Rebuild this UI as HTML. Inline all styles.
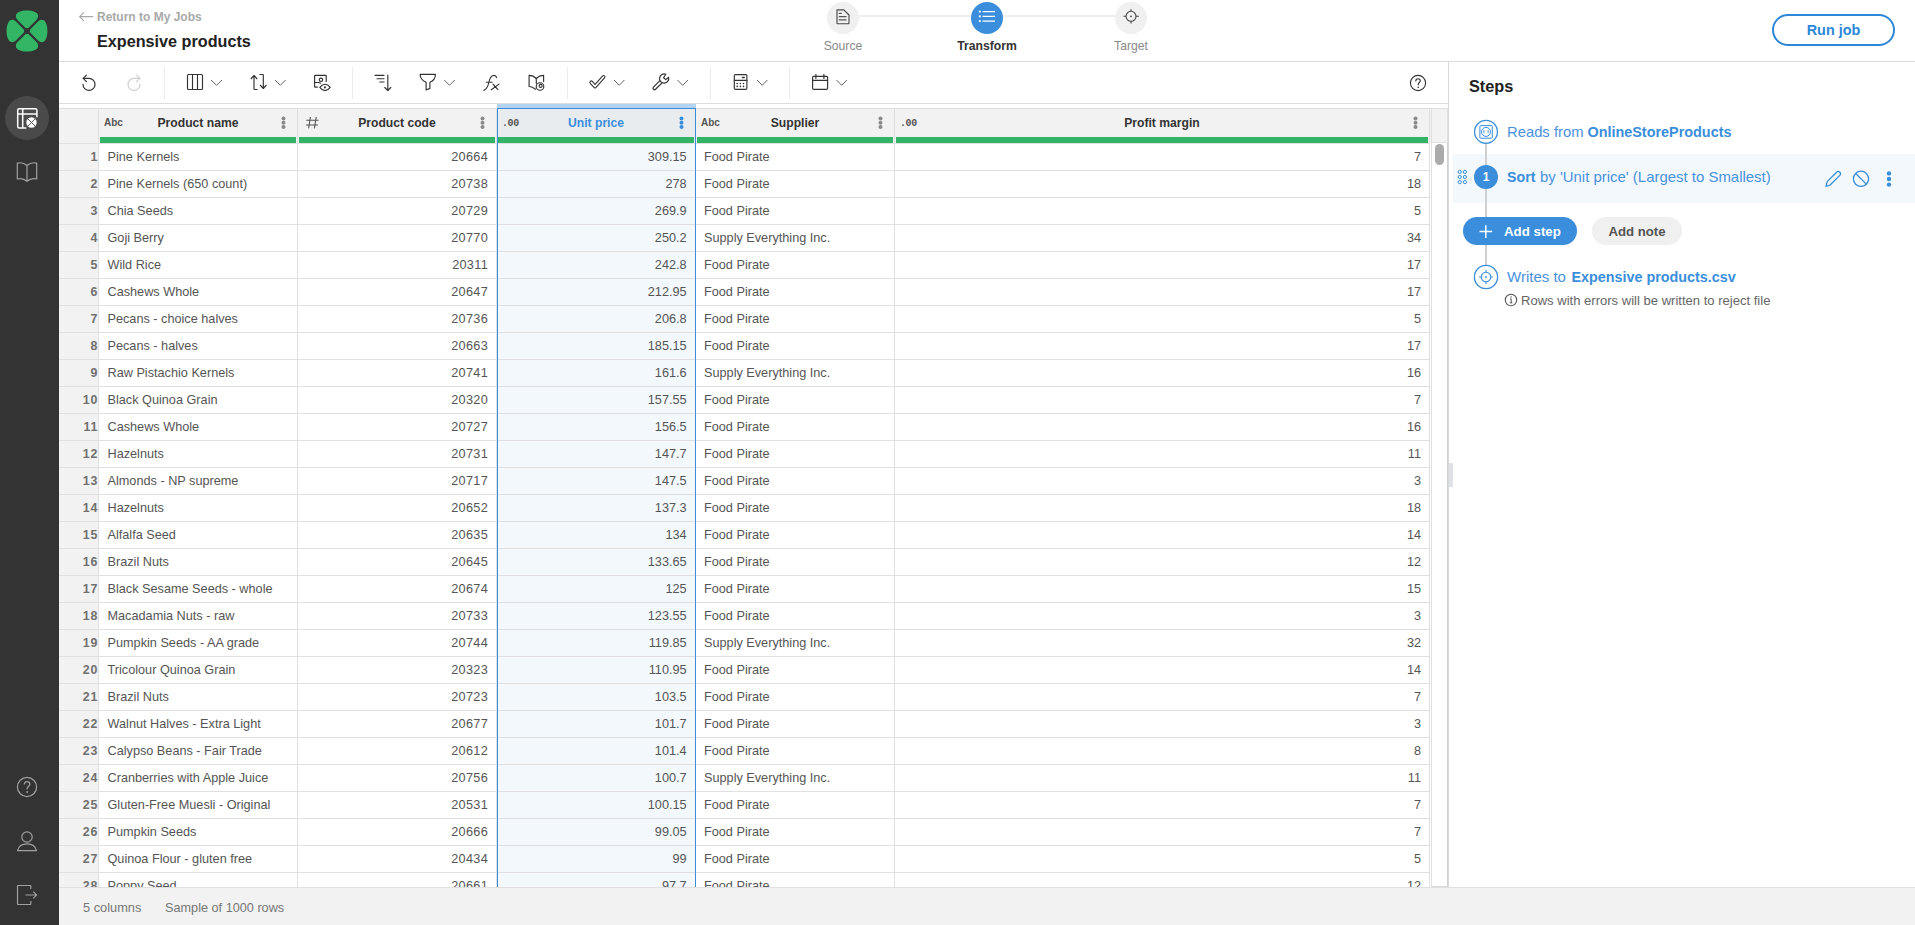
<!DOCTYPE html>
<html><head><meta charset="utf-8"><style>
*{box-sizing:border-box;margin:0;padding:0}
html,body{width:1915px;height:925px;overflow:hidden;background:#fff;font-family:"Liberation Sans",sans-serif}
.a{position:absolute}
.t{position:absolute;white-space:nowrap;line-height:1}
</style></head>
<body>
<div class="a" style="left:0;top:0;width:59px;height:925px;background:#333333"></div><div class="a" style="left:5px;top:96px;width:44px;height:44px;border-radius:50%;background:#4a4a4a"></div><div class="a" style="left:59px;top:61px;width:1856px;height:1px;background:#dcdcdc"></div><div class="t" style="left:97px;top:11px;font-size:12px;font-weight:700;color:#a9a9a9">Return to My Jobs</div><div class="t" style="left:97px;top:33px;font-size:16.2px;font-weight:700;color:#222">Expensive products</div><div class="a" style="left:859px;top:15px;width:112px;height:2px;background:#eeeeee"></div><div class="a" style="left:1003px;top:15px;width:112px;height:2px;background:#eeeeee"></div><div class="a" style="left:827px;top:2px;width:32px;height:32px;border-radius:50%;background:#f0f0f0"></div><div class="a" style="left:971px;top:2px;width:32px;height:32px;border-radius:50%;background:#3a8edb"></div><div class="a" style="left:1115px;top:2px;width:32px;height:32px;border-radius:50%;background:#f0f0f0"></div><div class="t" style="left:793px;width:100px;text-align:center;top:40px;font-size:12.2px;color:#8a8a8a">Source</div><div class="t" style="left:937px;width:100px;text-align:center;top:40px;font-size:12.2px;font-weight:700;color:#333">Transform</div><div class="t" style="left:1081px;width:100px;text-align:center;top:40px;font-size:12.2px;color:#8a8a8a">Target</div><div class="a" style="left:1772px;top:14px;width:123px;height:32px;border:2px solid #2d87d9;border-radius:16px"></div><div class="t" style="left:1772px;width:123px;text-align:center;top:23px;font-size:14.4px;font-weight:700;color:#2d87d9">Run job</div><div class="a" style="left:59px;top:103px;width:1389px;height:1px;background:#dcdcdc"></div><div class="a" style="left:164px;top:67px;width:1px;height:32px;background:#ececec"></div><div class="a" style="left:352px;top:67px;width:1px;height:32px;background:#ececec"></div><div class="a" style="left:567px;top:67px;width:1px;height:32px;background:#ececec"></div><div class="a" style="left:710px;top:67px;width:1px;height:32px;background:#ececec"></div><div class="a" style="left:789px;top:67px;width:1px;height:32px;background:#ececec"></div><div class="a" style="left:1448px;top:62px;width:1px;height:825px;background:#d9d9d9"></div><div class="a" style="left:59px;top:108px;width:1389px;height:35px;background:#f2f2f2"></div><div class="a" style="left:59px;top:108px;width:1389px;height:1px;background:#dedede"></div><div class="a" style="left:59px;top:143px;width:39px;height:744px;background:#f2f2f2"></div><div class="a" style="left:497px;top:143px;width:198px;height:744px;background:#f3f8fc"></div><div class="a" style="left:497px;top:108px;width:198px;height:35px;background:#e9ecef"></div><div class="a" style="left:497px;top:104px;width:199px;height:4px;background:#b3d3f1"></div><div class="a" style="left:59px;top:143px;width:1371px;height:1px;background:#e0e0e0"></div><div class="a" style="left:59px;top:170px;width:1371px;height:1px;background:#e0e0e0"></div><div class="a" style="left:59px;top:197px;width:1371px;height:1px;background:#e0e0e0"></div><div class="a" style="left:59px;top:224px;width:1371px;height:1px;background:#e0e0e0"></div><div class="a" style="left:59px;top:251px;width:1371px;height:1px;background:#e0e0e0"></div><div class="a" style="left:59px;top:278px;width:1371px;height:1px;background:#e0e0e0"></div><div class="a" style="left:59px;top:305px;width:1371px;height:1px;background:#e0e0e0"></div><div class="a" style="left:59px;top:332px;width:1371px;height:1px;background:#e0e0e0"></div><div class="a" style="left:59px;top:359px;width:1371px;height:1px;background:#e0e0e0"></div><div class="a" style="left:59px;top:386px;width:1371px;height:1px;background:#e0e0e0"></div><div class="a" style="left:59px;top:413px;width:1371px;height:1px;background:#e0e0e0"></div><div class="a" style="left:59px;top:440px;width:1371px;height:1px;background:#e0e0e0"></div><div class="a" style="left:59px;top:467px;width:1371px;height:1px;background:#e0e0e0"></div><div class="a" style="left:59px;top:494px;width:1371px;height:1px;background:#e0e0e0"></div><div class="a" style="left:59px;top:521px;width:1371px;height:1px;background:#e0e0e0"></div><div class="a" style="left:59px;top:548px;width:1371px;height:1px;background:#e0e0e0"></div><div class="a" style="left:59px;top:575px;width:1371px;height:1px;background:#e0e0e0"></div><div class="a" style="left:59px;top:602px;width:1371px;height:1px;background:#e0e0e0"></div><div class="a" style="left:59px;top:629px;width:1371px;height:1px;background:#e0e0e0"></div><div class="a" style="left:59px;top:656px;width:1371px;height:1px;background:#e0e0e0"></div><div class="a" style="left:59px;top:683px;width:1371px;height:1px;background:#e0e0e0"></div><div class="a" style="left:59px;top:710px;width:1371px;height:1px;background:#e0e0e0"></div><div class="a" style="left:59px;top:737px;width:1371px;height:1px;background:#e0e0e0"></div><div class="a" style="left:59px;top:764px;width:1371px;height:1px;background:#e0e0e0"></div><div class="a" style="left:59px;top:791px;width:1371px;height:1px;background:#e0e0e0"></div><div class="a" style="left:59px;top:818px;width:1371px;height:1px;background:#e0e0e0"></div><div class="a" style="left:59px;top:845px;width:1371px;height:1px;background:#e0e0e0"></div><div class="a" style="left:59px;top:872px;width:1371px;height:1px;background:#e0e0e0"></div><div class="a" style="left:98px;top:108px;width:1px;height:779px;background:#e0e0e0"></div><div class="a" style="left:297px;top:108px;width:1px;height:779px;background:#e0e0e0"></div><div class="a" style="left:496px;top:108px;width:1px;height:779px;background:#e0e0e0"></div><div class="a" style="left:695px;top:108px;width:1px;height:779px;background:#e0e0e0"></div><div class="a" style="left:894px;top:108px;width:1px;height:779px;background:#e0e0e0"></div><div class="a" style="left:1429px;top:108px;width:1px;height:779px;background:#e0e0e0"></div><div class="a" style="left:497px;top:108px;width:199px;height:1px;background:#3b8ddb"></div><div class="a" style="left:497px;top:108px;width:1px;height:779px;background:#3b8ddb"></div><div class="a" style="left:695px;top:108px;width:1px;height:779px;background:#3b8ddb"></div><div class="a" style="left:100px;top:137px;width:196px;height:6px;background:#33b366"></div><div class="a" style="left:299px;top:137px;width:196px;height:6px;background:#33b366"></div><div class="a" style="left:498px;top:137px;width:196px;height:6px;background:#33b366"></div><div class="a" style="left:697px;top:137px;width:196px;height:6px;background:#33b366"></div><div class="a" style="left:896px;top:137px;width:532px;height:6px;background:#33b366"></div><div class="a" style="left:1431px;top:108px;width:17px;height:779px;background:#fff;border-left:1px solid #e0e0e0;border-right:1px solid #d2d2d2;border-bottom:1px solid #d8d8d8"></div><div class="a" style="left:1431px;top:108px;width:17px;height:35px;background:#f2f2f2;border:1px solid #e0e0e0"></div><div class="a" style="left:1435px;top:144px;width:9px;height:21px;border-radius:5px;background:#ababab"></div><div class="t" style="left:99px;width:198px;text-align:center;top:117px;font-size:12.15px;font-weight:700;color:#333">Product name</div><div class="t" style="left:104px;top:118px;font-size:10px;font-weight:700;color:#555">Abc</div><div class="t" style="left:298px;width:198px;text-align:center;top:117px;font-size:12.15px;font-weight:700;color:#333">Product code</div><div class="t" style="left:497px;width:198px;text-align:center;top:117px;font-size:12.15px;font-weight:700;color:#3a8edb">Unit price</div><div class="t" style="left:502px;top:118.5px;font-size:10px;letter-spacing:-0.4px;font-weight:700;font-family:'Liberation Mono',monospace;color:#555">.00</div><div class="t" style="left:696px;width:198px;text-align:center;top:117px;font-size:12.15px;font-weight:700;color:#333">Supplier</div><div class="t" style="left:701px;top:118px;font-size:10px;font-weight:700;color:#555">Abc</div><div class="t" style="left:895px;width:534px;text-align:center;top:117px;font-size:12.15px;font-weight:700;color:#333">Profit margin</div><div class="t" style="left:900px;top:118.5px;font-size:10px;letter-spacing:-0.4px;font-weight:700;font-family:'Liberation Mono',monospace;color:#555">.00</div><div class="t" style="left:59px;width:39.3px;text-align:right;top:144px;line-height:26px;font-size:12.4px;letter-spacing:0.9px;font-weight:700;color:#707070">1</div><div class="t" style="left:107.5px;top:144px;line-height:26px;font-size:12.7px;color:#555">Pine Kernels</div><div class="t" style="left:298px;width:190px;text-align:right;top:144px;line-height:26px;font-size:12.7px;color:#555;letter-spacing:0.3px">20664</div><div class="t" style="left:497px;width:189.6px;text-align:right;top:144px;line-height:26px;font-size:12.7px;color:#555">309.15</div><div class="t" style="left:704px;top:144px;line-height:26px;font-size:12.7px;color:#555">Food Pirate</div><div class="t" style="left:895px;width:526px;text-align:right;top:144px;line-height:26px;font-size:12.7px;color:#555">7</div><div class="t" style="left:59px;width:39.3px;text-align:right;top:171px;line-height:26px;font-size:12.4px;letter-spacing:0.9px;font-weight:700;color:#707070">2</div><div class="t" style="left:107.5px;top:171px;line-height:26px;font-size:12.7px;color:#555">Pine Kernels (650 count)</div><div class="t" style="left:298px;width:190px;text-align:right;top:171px;line-height:26px;font-size:12.7px;color:#555;letter-spacing:0.3px">20738</div><div class="t" style="left:497px;width:189.6px;text-align:right;top:171px;line-height:26px;font-size:12.7px;color:#555">278</div><div class="t" style="left:704px;top:171px;line-height:26px;font-size:12.7px;color:#555">Food Pirate</div><div class="t" style="left:895px;width:526px;text-align:right;top:171px;line-height:26px;font-size:12.7px;color:#555">18</div><div class="t" style="left:59px;width:39.3px;text-align:right;top:198px;line-height:26px;font-size:12.4px;letter-spacing:0.9px;font-weight:700;color:#707070">3</div><div class="t" style="left:107.5px;top:198px;line-height:26px;font-size:12.7px;color:#555">Chia Seeds</div><div class="t" style="left:298px;width:190px;text-align:right;top:198px;line-height:26px;font-size:12.7px;color:#555;letter-spacing:0.3px">20729</div><div class="t" style="left:497px;width:189.6px;text-align:right;top:198px;line-height:26px;font-size:12.7px;color:#555">269.9</div><div class="t" style="left:704px;top:198px;line-height:26px;font-size:12.7px;color:#555">Food Pirate</div><div class="t" style="left:895px;width:526px;text-align:right;top:198px;line-height:26px;font-size:12.7px;color:#555">5</div><div class="t" style="left:59px;width:39.3px;text-align:right;top:225px;line-height:26px;font-size:12.4px;letter-spacing:0.9px;font-weight:700;color:#707070">4</div><div class="t" style="left:107.5px;top:225px;line-height:26px;font-size:12.7px;color:#555">Goji Berry</div><div class="t" style="left:298px;width:190px;text-align:right;top:225px;line-height:26px;font-size:12.7px;color:#555;letter-spacing:0.3px">20770</div><div class="t" style="left:497px;width:189.6px;text-align:right;top:225px;line-height:26px;font-size:12.7px;color:#555">250.2</div><div class="t" style="left:704px;top:225px;line-height:26px;font-size:12.7px;color:#555">Supply Everything Inc.</div><div class="t" style="left:895px;width:526px;text-align:right;top:225px;line-height:26px;font-size:12.7px;color:#555">34</div><div class="t" style="left:59px;width:39.3px;text-align:right;top:252px;line-height:26px;font-size:12.4px;letter-spacing:0.9px;font-weight:700;color:#707070">5</div><div class="t" style="left:107.5px;top:252px;line-height:26px;font-size:12.7px;color:#555">Wild Rice</div><div class="t" style="left:298px;width:190px;text-align:right;top:252px;line-height:26px;font-size:12.7px;color:#555;letter-spacing:0.3px">20311</div><div class="t" style="left:497px;width:189.6px;text-align:right;top:252px;line-height:26px;font-size:12.7px;color:#555">242.8</div><div class="t" style="left:704px;top:252px;line-height:26px;font-size:12.7px;color:#555">Food Pirate</div><div class="t" style="left:895px;width:526px;text-align:right;top:252px;line-height:26px;font-size:12.7px;color:#555">17</div><div class="t" style="left:59px;width:39.3px;text-align:right;top:279px;line-height:26px;font-size:12.4px;letter-spacing:0.9px;font-weight:700;color:#707070">6</div><div class="t" style="left:107.5px;top:279px;line-height:26px;font-size:12.7px;color:#555">Cashews Whole</div><div class="t" style="left:298px;width:190px;text-align:right;top:279px;line-height:26px;font-size:12.7px;color:#555;letter-spacing:0.3px">20647</div><div class="t" style="left:497px;width:189.6px;text-align:right;top:279px;line-height:26px;font-size:12.7px;color:#555">212.95</div><div class="t" style="left:704px;top:279px;line-height:26px;font-size:12.7px;color:#555">Food Pirate</div><div class="t" style="left:895px;width:526px;text-align:right;top:279px;line-height:26px;font-size:12.7px;color:#555">17</div><div class="t" style="left:59px;width:39.3px;text-align:right;top:306px;line-height:26px;font-size:12.4px;letter-spacing:0.9px;font-weight:700;color:#707070">7</div><div class="t" style="left:107.5px;top:306px;line-height:26px;font-size:12.7px;color:#555">Pecans - choice halves</div><div class="t" style="left:298px;width:190px;text-align:right;top:306px;line-height:26px;font-size:12.7px;color:#555;letter-spacing:0.3px">20736</div><div class="t" style="left:497px;width:189.6px;text-align:right;top:306px;line-height:26px;font-size:12.7px;color:#555">206.8</div><div class="t" style="left:704px;top:306px;line-height:26px;font-size:12.7px;color:#555">Food Pirate</div><div class="t" style="left:895px;width:526px;text-align:right;top:306px;line-height:26px;font-size:12.7px;color:#555">5</div><div class="t" style="left:59px;width:39.3px;text-align:right;top:333px;line-height:26px;font-size:12.4px;letter-spacing:0.9px;font-weight:700;color:#707070">8</div><div class="t" style="left:107.5px;top:333px;line-height:26px;font-size:12.7px;color:#555">Pecans - halves</div><div class="t" style="left:298px;width:190px;text-align:right;top:333px;line-height:26px;font-size:12.7px;color:#555;letter-spacing:0.3px">20663</div><div class="t" style="left:497px;width:189.6px;text-align:right;top:333px;line-height:26px;font-size:12.7px;color:#555">185.15</div><div class="t" style="left:704px;top:333px;line-height:26px;font-size:12.7px;color:#555">Food Pirate</div><div class="t" style="left:895px;width:526px;text-align:right;top:333px;line-height:26px;font-size:12.7px;color:#555">17</div><div class="t" style="left:59px;width:39.3px;text-align:right;top:360px;line-height:26px;font-size:12.4px;letter-spacing:0.9px;font-weight:700;color:#707070">9</div><div class="t" style="left:107.5px;top:360px;line-height:26px;font-size:12.7px;color:#555">Raw Pistachio Kernels</div><div class="t" style="left:298px;width:190px;text-align:right;top:360px;line-height:26px;font-size:12.7px;color:#555;letter-spacing:0.3px">20741</div><div class="t" style="left:497px;width:189.6px;text-align:right;top:360px;line-height:26px;font-size:12.7px;color:#555">161.6</div><div class="t" style="left:704px;top:360px;line-height:26px;font-size:12.7px;color:#555">Supply Everything Inc.</div><div class="t" style="left:895px;width:526px;text-align:right;top:360px;line-height:26px;font-size:12.7px;color:#555">16</div><div class="t" style="left:59px;width:39.3px;text-align:right;top:387px;line-height:26px;font-size:12.4px;letter-spacing:0.9px;font-weight:700;color:#707070">10</div><div class="t" style="left:107.5px;top:387px;line-height:26px;font-size:12.7px;color:#555">Black Quinoa Grain</div><div class="t" style="left:298px;width:190px;text-align:right;top:387px;line-height:26px;font-size:12.7px;color:#555;letter-spacing:0.3px">20320</div><div class="t" style="left:497px;width:189.6px;text-align:right;top:387px;line-height:26px;font-size:12.7px;color:#555">157.55</div><div class="t" style="left:704px;top:387px;line-height:26px;font-size:12.7px;color:#555">Food Pirate</div><div class="t" style="left:895px;width:526px;text-align:right;top:387px;line-height:26px;font-size:12.7px;color:#555">7</div><div class="t" style="left:59px;width:39.3px;text-align:right;top:414px;line-height:26px;font-size:12.4px;letter-spacing:0.9px;font-weight:700;color:#707070">11</div><div class="t" style="left:107.5px;top:414px;line-height:26px;font-size:12.7px;color:#555">Cashews Whole</div><div class="t" style="left:298px;width:190px;text-align:right;top:414px;line-height:26px;font-size:12.7px;color:#555;letter-spacing:0.3px">20727</div><div class="t" style="left:497px;width:189.6px;text-align:right;top:414px;line-height:26px;font-size:12.7px;color:#555">156.5</div><div class="t" style="left:704px;top:414px;line-height:26px;font-size:12.7px;color:#555">Food Pirate</div><div class="t" style="left:895px;width:526px;text-align:right;top:414px;line-height:26px;font-size:12.7px;color:#555">16</div><div class="t" style="left:59px;width:39.3px;text-align:right;top:441px;line-height:26px;font-size:12.4px;letter-spacing:0.9px;font-weight:700;color:#707070">12</div><div class="t" style="left:107.5px;top:441px;line-height:26px;font-size:12.7px;color:#555">Hazelnuts</div><div class="t" style="left:298px;width:190px;text-align:right;top:441px;line-height:26px;font-size:12.7px;color:#555;letter-spacing:0.3px">20731</div><div class="t" style="left:497px;width:189.6px;text-align:right;top:441px;line-height:26px;font-size:12.7px;color:#555">147.7</div><div class="t" style="left:704px;top:441px;line-height:26px;font-size:12.7px;color:#555">Food Pirate</div><div class="t" style="left:895px;width:526px;text-align:right;top:441px;line-height:26px;font-size:12.7px;color:#555">11</div><div class="t" style="left:59px;width:39.3px;text-align:right;top:468px;line-height:26px;font-size:12.4px;letter-spacing:0.9px;font-weight:700;color:#707070">13</div><div class="t" style="left:107.5px;top:468px;line-height:26px;font-size:12.7px;color:#555">Almonds - NP supreme</div><div class="t" style="left:298px;width:190px;text-align:right;top:468px;line-height:26px;font-size:12.7px;color:#555;letter-spacing:0.3px">20717</div><div class="t" style="left:497px;width:189.6px;text-align:right;top:468px;line-height:26px;font-size:12.7px;color:#555">147.5</div><div class="t" style="left:704px;top:468px;line-height:26px;font-size:12.7px;color:#555">Food Pirate</div><div class="t" style="left:895px;width:526px;text-align:right;top:468px;line-height:26px;font-size:12.7px;color:#555">3</div><div class="t" style="left:59px;width:39.3px;text-align:right;top:495px;line-height:26px;font-size:12.4px;letter-spacing:0.9px;font-weight:700;color:#707070">14</div><div class="t" style="left:107.5px;top:495px;line-height:26px;font-size:12.7px;color:#555">Hazelnuts</div><div class="t" style="left:298px;width:190px;text-align:right;top:495px;line-height:26px;font-size:12.7px;color:#555;letter-spacing:0.3px">20652</div><div class="t" style="left:497px;width:189.6px;text-align:right;top:495px;line-height:26px;font-size:12.7px;color:#555">137.3</div><div class="t" style="left:704px;top:495px;line-height:26px;font-size:12.7px;color:#555">Food Pirate</div><div class="t" style="left:895px;width:526px;text-align:right;top:495px;line-height:26px;font-size:12.7px;color:#555">18</div><div class="t" style="left:59px;width:39.3px;text-align:right;top:522px;line-height:26px;font-size:12.4px;letter-spacing:0.9px;font-weight:700;color:#707070">15</div><div class="t" style="left:107.5px;top:522px;line-height:26px;font-size:12.7px;color:#555">Alfalfa Seed</div><div class="t" style="left:298px;width:190px;text-align:right;top:522px;line-height:26px;font-size:12.7px;color:#555;letter-spacing:0.3px">20635</div><div class="t" style="left:497px;width:189.6px;text-align:right;top:522px;line-height:26px;font-size:12.7px;color:#555">134</div><div class="t" style="left:704px;top:522px;line-height:26px;font-size:12.7px;color:#555">Food Pirate</div><div class="t" style="left:895px;width:526px;text-align:right;top:522px;line-height:26px;font-size:12.7px;color:#555">14</div><div class="t" style="left:59px;width:39.3px;text-align:right;top:549px;line-height:26px;font-size:12.4px;letter-spacing:0.9px;font-weight:700;color:#707070">16</div><div class="t" style="left:107.5px;top:549px;line-height:26px;font-size:12.7px;color:#555">Brazil Nuts</div><div class="t" style="left:298px;width:190px;text-align:right;top:549px;line-height:26px;font-size:12.7px;color:#555;letter-spacing:0.3px">20645</div><div class="t" style="left:497px;width:189.6px;text-align:right;top:549px;line-height:26px;font-size:12.7px;color:#555">133.65</div><div class="t" style="left:704px;top:549px;line-height:26px;font-size:12.7px;color:#555">Food Pirate</div><div class="t" style="left:895px;width:526px;text-align:right;top:549px;line-height:26px;font-size:12.7px;color:#555">12</div><div class="t" style="left:59px;width:39.3px;text-align:right;top:576px;line-height:26px;font-size:12.4px;letter-spacing:0.9px;font-weight:700;color:#707070">17</div><div class="t" style="left:107.5px;top:576px;line-height:26px;font-size:12.7px;color:#555">Black Sesame Seeds - whole</div><div class="t" style="left:298px;width:190px;text-align:right;top:576px;line-height:26px;font-size:12.7px;color:#555;letter-spacing:0.3px">20674</div><div class="t" style="left:497px;width:189.6px;text-align:right;top:576px;line-height:26px;font-size:12.7px;color:#555">125</div><div class="t" style="left:704px;top:576px;line-height:26px;font-size:12.7px;color:#555">Food Pirate</div><div class="t" style="left:895px;width:526px;text-align:right;top:576px;line-height:26px;font-size:12.7px;color:#555">15</div><div class="t" style="left:59px;width:39.3px;text-align:right;top:603px;line-height:26px;font-size:12.4px;letter-spacing:0.9px;font-weight:700;color:#707070">18</div><div class="t" style="left:107.5px;top:603px;line-height:26px;font-size:12.7px;color:#555">Macadamia Nuts - raw</div><div class="t" style="left:298px;width:190px;text-align:right;top:603px;line-height:26px;font-size:12.7px;color:#555;letter-spacing:0.3px">20733</div><div class="t" style="left:497px;width:189.6px;text-align:right;top:603px;line-height:26px;font-size:12.7px;color:#555">123.55</div><div class="t" style="left:704px;top:603px;line-height:26px;font-size:12.7px;color:#555">Food Pirate</div><div class="t" style="left:895px;width:526px;text-align:right;top:603px;line-height:26px;font-size:12.7px;color:#555">3</div><div class="t" style="left:59px;width:39.3px;text-align:right;top:630px;line-height:26px;font-size:12.4px;letter-spacing:0.9px;font-weight:700;color:#707070">19</div><div class="t" style="left:107.5px;top:630px;line-height:26px;font-size:12.7px;color:#555">Pumpkin Seeds - AA grade</div><div class="t" style="left:298px;width:190px;text-align:right;top:630px;line-height:26px;font-size:12.7px;color:#555;letter-spacing:0.3px">20744</div><div class="t" style="left:497px;width:189.6px;text-align:right;top:630px;line-height:26px;font-size:12.7px;color:#555">119.85</div><div class="t" style="left:704px;top:630px;line-height:26px;font-size:12.7px;color:#555">Supply Everything Inc.</div><div class="t" style="left:895px;width:526px;text-align:right;top:630px;line-height:26px;font-size:12.7px;color:#555">32</div><div class="t" style="left:59px;width:39.3px;text-align:right;top:657px;line-height:26px;font-size:12.4px;letter-spacing:0.9px;font-weight:700;color:#707070">20</div><div class="t" style="left:107.5px;top:657px;line-height:26px;font-size:12.7px;color:#555">Tricolour Quinoa Grain</div><div class="t" style="left:298px;width:190px;text-align:right;top:657px;line-height:26px;font-size:12.7px;color:#555;letter-spacing:0.3px">20323</div><div class="t" style="left:497px;width:189.6px;text-align:right;top:657px;line-height:26px;font-size:12.7px;color:#555">110.95</div><div class="t" style="left:704px;top:657px;line-height:26px;font-size:12.7px;color:#555">Food Pirate</div><div class="t" style="left:895px;width:526px;text-align:right;top:657px;line-height:26px;font-size:12.7px;color:#555">14</div><div class="t" style="left:59px;width:39.3px;text-align:right;top:684px;line-height:26px;font-size:12.4px;letter-spacing:0.9px;font-weight:700;color:#707070">21</div><div class="t" style="left:107.5px;top:684px;line-height:26px;font-size:12.7px;color:#555">Brazil Nuts</div><div class="t" style="left:298px;width:190px;text-align:right;top:684px;line-height:26px;font-size:12.7px;color:#555;letter-spacing:0.3px">20723</div><div class="t" style="left:497px;width:189.6px;text-align:right;top:684px;line-height:26px;font-size:12.7px;color:#555">103.5</div><div class="t" style="left:704px;top:684px;line-height:26px;font-size:12.7px;color:#555">Food Pirate</div><div class="t" style="left:895px;width:526px;text-align:right;top:684px;line-height:26px;font-size:12.7px;color:#555">7</div><div class="t" style="left:59px;width:39.3px;text-align:right;top:711px;line-height:26px;font-size:12.4px;letter-spacing:0.9px;font-weight:700;color:#707070">22</div><div class="t" style="left:107.5px;top:711px;line-height:26px;font-size:12.7px;color:#555">Walnut Halves - Extra Light</div><div class="t" style="left:298px;width:190px;text-align:right;top:711px;line-height:26px;font-size:12.7px;color:#555;letter-spacing:0.3px">20677</div><div class="t" style="left:497px;width:189.6px;text-align:right;top:711px;line-height:26px;font-size:12.7px;color:#555">101.7</div><div class="t" style="left:704px;top:711px;line-height:26px;font-size:12.7px;color:#555">Food Pirate</div><div class="t" style="left:895px;width:526px;text-align:right;top:711px;line-height:26px;font-size:12.7px;color:#555">3</div><div class="t" style="left:59px;width:39.3px;text-align:right;top:738px;line-height:26px;font-size:12.4px;letter-spacing:0.9px;font-weight:700;color:#707070">23</div><div class="t" style="left:107.5px;top:738px;line-height:26px;font-size:12.7px;color:#555">Calypso Beans - Fair Trade</div><div class="t" style="left:298px;width:190px;text-align:right;top:738px;line-height:26px;font-size:12.7px;color:#555;letter-spacing:0.3px">20612</div><div class="t" style="left:497px;width:189.6px;text-align:right;top:738px;line-height:26px;font-size:12.7px;color:#555">101.4</div><div class="t" style="left:704px;top:738px;line-height:26px;font-size:12.7px;color:#555">Food Pirate</div><div class="t" style="left:895px;width:526px;text-align:right;top:738px;line-height:26px;font-size:12.7px;color:#555">8</div><div class="t" style="left:59px;width:39.3px;text-align:right;top:765px;line-height:26px;font-size:12.4px;letter-spacing:0.9px;font-weight:700;color:#707070">24</div><div class="t" style="left:107.5px;top:765px;line-height:26px;font-size:12.7px;color:#555">Cranberries with Apple Juice</div><div class="t" style="left:298px;width:190px;text-align:right;top:765px;line-height:26px;font-size:12.7px;color:#555;letter-spacing:0.3px">20756</div><div class="t" style="left:497px;width:189.6px;text-align:right;top:765px;line-height:26px;font-size:12.7px;color:#555">100.7</div><div class="t" style="left:704px;top:765px;line-height:26px;font-size:12.7px;color:#555">Supply Everything Inc.</div><div class="t" style="left:895px;width:526px;text-align:right;top:765px;line-height:26px;font-size:12.7px;color:#555">11</div><div class="t" style="left:59px;width:39.3px;text-align:right;top:792px;line-height:26px;font-size:12.4px;letter-spacing:0.9px;font-weight:700;color:#707070">25</div><div class="t" style="left:107.5px;top:792px;line-height:26px;font-size:12.7px;color:#555">Gluten-Free Muesli - Original</div><div class="t" style="left:298px;width:190px;text-align:right;top:792px;line-height:26px;font-size:12.7px;color:#555;letter-spacing:0.3px">20531</div><div class="t" style="left:497px;width:189.6px;text-align:right;top:792px;line-height:26px;font-size:12.7px;color:#555">100.15</div><div class="t" style="left:704px;top:792px;line-height:26px;font-size:12.7px;color:#555">Food Pirate</div><div class="t" style="left:895px;width:526px;text-align:right;top:792px;line-height:26px;font-size:12.7px;color:#555">7</div><div class="t" style="left:59px;width:39.3px;text-align:right;top:819px;line-height:26px;font-size:12.4px;letter-spacing:0.9px;font-weight:700;color:#707070">26</div><div class="t" style="left:107.5px;top:819px;line-height:26px;font-size:12.7px;color:#555">Pumpkin Seeds</div><div class="t" style="left:298px;width:190px;text-align:right;top:819px;line-height:26px;font-size:12.7px;color:#555;letter-spacing:0.3px">20666</div><div class="t" style="left:497px;width:189.6px;text-align:right;top:819px;line-height:26px;font-size:12.7px;color:#555">99.05</div><div class="t" style="left:704px;top:819px;line-height:26px;font-size:12.7px;color:#555">Food Pirate</div><div class="t" style="left:895px;width:526px;text-align:right;top:819px;line-height:26px;font-size:12.7px;color:#555">7</div><div class="t" style="left:59px;width:39.3px;text-align:right;top:846px;line-height:26px;font-size:12.4px;letter-spacing:0.9px;font-weight:700;color:#707070">27</div><div class="t" style="left:107.5px;top:846px;line-height:26px;font-size:12.7px;color:#555">Quinoa Flour - gluten free</div><div class="t" style="left:298px;width:190px;text-align:right;top:846px;line-height:26px;font-size:12.7px;color:#555;letter-spacing:0.3px">20434</div><div class="t" style="left:497px;width:189.6px;text-align:right;top:846px;line-height:26px;font-size:12.7px;color:#555">99</div><div class="t" style="left:704px;top:846px;line-height:26px;font-size:12.7px;color:#555">Food Pirate</div><div class="t" style="left:895px;width:526px;text-align:right;top:846px;line-height:26px;font-size:12.7px;color:#555">5</div><div class="t" style="left:59px;width:39.3px;text-align:right;top:873px;line-height:26px;font-size:12.4px;letter-spacing:0.9px;font-weight:700;color:#707070">28</div><div class="t" style="left:107.5px;top:873px;line-height:26px;font-size:12.7px;color:#555">Poppy Seed</div><div class="t" style="left:298px;width:190px;text-align:right;top:873px;line-height:26px;font-size:12.7px;color:#555;letter-spacing:0.3px">20661</div><div class="t" style="left:497px;width:189.6px;text-align:right;top:873px;line-height:26px;font-size:12.7px;color:#555">97.7</div><div class="t" style="left:704px;top:873px;line-height:26px;font-size:12.7px;color:#555">Food Pirate</div><div class="t" style="left:895px;width:526px;text-align:right;top:873px;line-height:26px;font-size:12.7px;color:#555">12</div><div class="a" style="left:59px;top:887px;width:1856px;height:38px;background:#f2f2f2;border-top:1px solid #e0e0e0"></div><div class="t" style="left:83px;top:902px;font-size:12.8px;color:#777">5 columns</div><div class="t" style="left:165px;top:902px;font-size:12.7px;color:#777">Sample of 1000 rows</div><div class="t" style="left:1469px;top:78px;font-size:16.3px;font-weight:700;color:#222">Steps</div><div class="a" style="left:1453px;top:154px;width:462px;height:49px;background:#f3f8fc"></div><div class="a" style="left:1485px;top:144px;width:2px;height:121px;background:#d0d0d0"></div><div class="a" style="left:1474px;top:120px;width:24px;height:24px;border-radius:50%;border:1.5px solid #3a8edb;background:#fff"></div><div class="t" style="left:1507px;top:125px;font-size:14.8px;color:#4a92dd">Reads from</div><div class="t" style="left:1587.5px;top:125px;font-size:14.4px;font-weight:700;color:#3a8edb">OnlineStoreProducts</div><div class="a" style="left:1474px;top:165px;width:24px;height:24px;border-radius:50%;background:#3a8edb"></div><div class="t" style="left:1474px;width:24px;text-align:center;top:171px;font-size:12px;font-weight:700;color:#fff">1</div><div class="t" style="left:1507px;top:170px;font-size:14.2px;font-weight:700;color:#3a8edb">Sort</div><div class="t" style="left:1540px;top:170px;font-size:14.95px;color:#4a92dd">by 'Unit price' (Largest to Smallest)</div><div class="a" style="left:1463px;top:217px;width:114px;height:28px;border-radius:14px;background:#3a8edb"></div><div class="t" style="left:1504px;top:225px;font-size:13.3px;font-weight:700;color:#fff">Add step</div><div class="a" style="left:1592px;top:217px;width:90px;height:28px;border-radius:14px;background:#f0f0f0"></div><div class="t" style="left:1592px;width:90px;text-align:center;top:225px;font-size:13.2px;font-weight:700;color:#555">Add note</div><div class="a" style="left:1474px;top:265px;width:24px;height:24px;border-radius:50%;border:1.5px solid #3a8edb;background:#fff"></div><div class="t" style="left:1507px;top:269px;font-size:15px;color:#4a92dd">Writes to</div><div class="t" style="left:1571.5px;top:270px;font-size:14.35px;font-weight:700;color:#3a8edb">Expensive products.csv</div><div class="t" style="left:1521px;top:293.5px;font-size:13.05px;color:#666">Rows with errors will be written to reject file</div>
<svg class="a" style="left:0;top:0" width="1915" height="925" viewBox="0 0 1915 925" fill="none"><!-- logo -->
<g transform="translate(27,31)" fill="#33b566">
<path d="M-1.1,-2.7 Q0,-3.4 1.1,-2.7 L9.2,-10.8 C11.9,-13.5 11.7,-16.9 9,-18.4 C6,-20.1 3,-20.4 0,-20.4 C-3,-20.4 -6,-20.1 -9,-18.4 C-11.7,-16.9 -11.9,-13.5 -9.2,-10.8 Z"/>
<path d="M-1.1,-2.7 Q0,-3.4 1.1,-2.7 L9.2,-10.8 C11.9,-13.5 11.7,-16.9 9,-18.4 C6,-20.1 3,-20.4 0,-20.4 C-3,-20.4 -6,-20.1 -9,-18.4 C-11.7,-16.9 -11.9,-13.5 -9.2,-10.8 Z" transform="rotate(90)"/>
<path d="M-1.1,-2.7 Q0,-3.4 1.1,-2.7 L9.2,-10.8 C11.9,-13.5 11.7,-16.9 9,-18.4 C6,-20.1 3,-20.4 0,-20.4 C-3,-20.4 -6,-20.1 -9,-18.4 C-11.7,-16.9 -11.9,-13.5 -9.2,-10.8 Z" transform="rotate(180)"/>
<path d="M-1.1,-2.7 Q0,-3.4 1.1,-2.7 L9.2,-10.8 C11.9,-13.5 11.7,-16.9 9,-18.4 C6,-20.1 3,-20.4 0,-20.4 C-3,-20.4 -6,-20.1 -9,-18.4 C-11.7,-16.9 -11.9,-13.5 -9.2,-10.8 Z" transform="rotate(270)"/>
</g>
<!-- active nav icon: table + badge -->
<g stroke="#fff" stroke-width="1.5" fill="none">
<path d="M26.3,127.9 H19.2 Q17.7,127.9 17.7,126.4 V110.2 Q17.7,108.7 19.2,108.7 H35.4 Q36.9,108.7 36.9,110.2 V117.3"/>
<path d="M17.7,113.9 H36.9 M22.7,108.7 V127.9"/>
</g>
<circle cx="31.5" cy="122.5" r="6" fill="#fff" stroke="#4a4a4a" stroke-width="1.6"/>
<path d="M27.6,118.6 L35.4,126.4 M35.4,118.6 L27.6,126.4" stroke="#4a4a4a" stroke-width="0.9"/>
<!-- book (sidebar) -->
<path d="M27,165.5 C24,162.8 20.5,162.3 17.3,163.2 V179 C20.5,178.1 24,178.6 27,181.3 C30,178.6 33.5,178.1 36.7,179 V163.2 C33.5,162.3 30,162.8 27,165.5 Z M27,165.5 V181.3" stroke="#a0a0a0" stroke-width="1.2" fill="none" stroke-linejoin="round"/>
<!-- help sidebar -->
<circle cx="27" cy="787" r="9.6" stroke="#a0a0a0" stroke-width="1.2" fill="none"/>
<path d="M24.3,784.5 C24.3,782.6 25.6,781.6 27.1,781.6 C28.7,781.6 29.8,782.7 29.8,784.2 C29.8,786.2 27.2,786.4 27.2,788.6 V789.3" stroke="#a0a0a0" stroke-width="1.3" fill="none"/>
<circle cx="27.2" cy="792" r="0.9" fill="#a0a0a0"/>
<!-- user -->
<circle cx="27" cy="837" r="5.2" stroke="#a0a0a0" stroke-width="1.2" fill="none"/>
<path d="M17.5,850.6 C18.6,846 22.3,843.8 27,843.8 C31.7,843.8 35.4,846 36.5,850.6 Z" stroke="#a0a0a0" stroke-width="1.2" fill="none" stroke-linejoin="round"/>
<!-- logout -->
<path d="M30.8,889 V886 Q30.8,885.5 30.3,885.5 H18 Q17.5,885.5 17.5,886 V904 Q17.5,904.5 18,904.5 H30.3 Q30.8,904.5 30.8,904 V901" stroke="#a0a0a0" stroke-width="1.2" fill="none"/>
<path d="M25.5,895 H36.6 M33.3,891.7 L36.6,895 L33.3,898.3" stroke="#a0a0a0" stroke-width="1.2" fill="none"/>

<!-- stepper icons -->
<path d="M837,9.8 H843.8 L849,15 V23.2 Q849,23.7 848.5,23.7 H837.5 Q837,23.7 837,23.2 Z" stroke="#4a4a4a" stroke-width="1.15" fill="none" stroke-linejoin="round"/>
<path d="M838.8,13.3 H841.8 M838.8,16.7 H846.5 M838.8,19.9 H846.5" stroke="#555" stroke-width="1.2"/>
<g fill="#fff"><circle cx="979.8" cy="11.6" r="1.1"/><circle cx="979.8" cy="16.4" r="1.1"/><circle cx="979.8" cy="21.2" r="1.1"/></g>
<path d="M982.5,11.6 H995 M982.5,16.4 H995 M982.5,21.2 H995" stroke="#fff" stroke-width="1.2"/>
<circle cx="1131" cy="16.3" r="5" stroke="#444" stroke-width="1.1" fill="none"/>
<path d="M1131,9.2 V11.3 M1131,21.3 V23.5 M1123.5,16.3 H1126 M1136,16.3 H1138.8" stroke="#444" stroke-width="1.1"/>
<circle cx="1131" cy="16.3" r="0.9" fill="#444"/>

<!-- toolbar -->
<g stroke="#333" stroke-width="1.2" fill="none" stroke-linecap="round" stroke-linejoin="round">
<path d="M83.3,78.4 H89 A6,6 0 1 1 83,84.4"/>
<path d="M86.4,75.2 L83.2,78.4 L86.4,81.6"/>
</g>
<g stroke="#cfcfcf" stroke-width="1.2" fill="none" stroke-linecap="round" stroke-linejoin="round">
<path d="M139.7,78.4 H134 A6,6 0 1 0 140,84.4"/>
<path d="M136.6,75.2 L139.8,78.4 L136.6,81.6"/>
</g>
<g stroke="#333" stroke-width="1.15" fill="none" stroke-linejoin="round">
<rect x="187.5" y="74.5" width="15" height="15" rx="1"/>
<path d="M192.5,74.5 V89.5 M197.5,74.5 V89.5"/>
<path d="M254,89.5 V75.5 M250.8,79 L254,75.5 L257.2,79 M254,89.5 H257.5"/>
<path d="M263.3,74.5 V88.5 M260.1,85 L263.3,88.5 L266.5,85 M263.3,74.5 H259.5"/>
<path d="M317.8,87.1 H315.2 Q314.6,87.1 314.6,86.5 V76 Q314.6,75.4 315.2,75.4 H325.6 Q326.2,75.4 326.2,76 V82"/>
<path d="M314.6,82.5 H318.3 Q319.8,82.5 320.8,83.5"/>
<path d="M319.8,87.4 C321.8,84.7 324,84.2 325,84.2 C326,84.2 328.2,84.7 330.2,87.4 C328.2,90.1 326,90.6 325,90.6 C324,90.6 321.8,90.1 319.8,87.4 Z"/>
<circle cx="321" cy="79.8" r="1.7"/>
</g>
<circle cx="324.9" cy="87.4" r="1.05" fill="#333"/>
<g stroke="#666" stroke-width="1" fill="none">
<path d="M211,80 L216.5,85.3 L222,80"/>
<path d="M275,80 L280.3,85.3 L285.6,80"/>
<path d="M444.3,80 L449.5,85.3 L454.8,80"/>
<path d="M614,80 L619.2,85.3 L624.4,80"/>
<path d="M677.5,80 L682.7,85.3 L687.9,80"/>
<path d="M757,80 L762.2,85.3 L767.4,80"/>
<path d="M836.5,80 L841.7,85.3 L846.9,80"/>
</g>
<g stroke="#333" stroke-width="1.15" fill="none" stroke-linejoin="round" stroke-linecap="round">
<path d="M375,75.4 H384 M377,78.7 H384 M379.8,82 H384" stroke-width="1.1"/>
<path d="M387.8,75 V90.5 M384.8,87.5 L387.8,90.5 L390.8,87.5"/>
<path d="M420.2,74.4 H435.4 C435.4,78.2 433.3,80.8 429.9,82.3 V88.4 L426.1,90 V82.3 C422.9,80.8 420.2,78.2 420.2,74.4 Z"/>
<path d="M483.8,90.4 C486.5,89.5 488,86.5 489,82 C490,77.5 491.5,75.4 494,75.3 C495.3,75.3 496.3,76.3 496.6,77.6"/>
<path d="M486.4,82.2 H492.1"/>
<path d="M491.3,89.7 L499,84.1 M493,84.1 L497.9,89.7"/>
<path d="M536.3,78.5 C534.5,76.5 531.5,75.3 529.1,75.3 V86.5 C531.5,86.6 533.5,87.6 535.6,89.2"/>
<path d="M536.3,78.5 C538.1,76.5 541,75.3 543.6,75.3 V81.6"/>
<path d="M536.3,78.5 V83.5"/>
<circle cx="540" cy="86.5" r="3.8"/>
<circle cx="540.6" cy="85.9" r="1.5"/>
<rect x="734.3" y="74.6" width="12.6" height="14.8" rx="1.2"/>
<path d="M734.3,80.3 H746.9"/>
<path d="M742.4,77.5 H744.3" stroke-width="1.3"/>
<rect x="812.6" y="76.3" width="15" height="13.1" rx="1.1"/>
<path d="M812.6,80.3 H827.6 M815.9,74.2 V78.4 M823.9,74.2 V78.4"/>
<circle cx="1418" cy="83" r="7.6"/>
<path d="M1415.8,81 C1415.8,79.5 1416.8,78.7 1418.1,78.7 C1419.4,78.7 1420.3,79.6 1420.3,80.8 C1420.3,82.4 1418.2,82.6 1418.2,84.4 V84.8"/>
</g>
<g fill="#333"><circle cx="737.2" cy="83.5" r="0.8"/><circle cx="740.4" cy="83.5" r="0.8"/><circle cx="743.5" cy="83.5" r="0.8"/><circle cx="737.2" cy="86.4" r="0.8"/><circle cx="740.4" cy="86.4" r="0.8"/><circle cx="743.5" cy="86.4" r="0.8"/><circle cx="1418.2" cy="87.2" r="0.8"/></g>
<!-- check outline -->
<path d="M591.3,82.4 L595,86.5 L603.5,77" stroke="#333" stroke-width="3.9" fill="none" stroke-linecap="round" stroke-linejoin="round"/>
<path d="M591.3,82.4 L595,86.5 L603.5,77" stroke="#fff" stroke-width="1.7" fill="none" stroke-linecap="round" stroke-linejoin="round"/>
<!-- wrench outline -->
<path d="M654.5,88.2 L662.2,80.5" stroke="#333" stroke-width="4.2" fill="none" stroke-linecap="round"/>
<path d="M654.5,88.2 L662.2,80.5" stroke="#fff" stroke-width="1.8" fill="none" stroke-linecap="round"/>
<path d="M668.6,77.3 A4.6,4.6 0 1 1 665.8,74.2 L663.6,77.8 L665.8,79.6 Z" stroke="#333" stroke-width="1.2" fill="#fff" stroke-linejoin="round"/>
<!-- grid header # -->
<path d="M308.6,128.3 L310.4,117 M314.4,128.3 L316.2,117 M306.3,120.3 H318.5 M306,125 H318" stroke="#555" stroke-width="1.1" fill="none"/>

<!-- right panel icons -->
<circle cx="1486" cy="131.8" r="11.4" stroke="#3a8edb" stroke-width="1.2" fill="#fff"/>
<rect x="1479.9" y="125.6" width="12.4" height="12.6" rx="0.8" stroke="#3a8edb" stroke-width="1" fill="none"/>
<circle cx="1486" cy="131.9" r="4.5" stroke="#3a8edb" stroke-width="1" fill="none"/>
<path d="M1484,130 V133.2 M1488.1,130 V133.2" stroke="#3a8edb" stroke-width="0.9"/>
<g stroke="#3a8edb" stroke-width="1" fill="none">
<circle cx="1459.7" cy="171.9" r="1.6"/><circle cx="1464.9" cy="171.9" r="1.6"/>
<circle cx="1459.7" cy="177" r="1.6"/><circle cx="1464.9" cy="177" r="1.6"/>
<circle cx="1459.7" cy="182.1" r="1.6"/><circle cx="1464.9" cy="182.1" r="1.6"/>
</g>
<g stroke="#3a8edb" stroke-width="1.3" fill="none" stroke-linejoin="round">
<path d="M1826,186.5 L1827.2,181.6 L1836.6,172.2 C1837.5,171.3 1838.9,171.3 1839.8,172.2 C1840.7,173.1 1840.7,174.5 1839.8,175.4 L1830.4,184.8 Z"/>
<circle cx="1861" cy="178.8" r="7.6"/>
<path d="M1855.7,173.5 L1866.3,184.1"/>
</g>
<g fill="#3a8edb"><circle cx="1889" cy="173.4" r="2.2"/><circle cx="1889" cy="179" r="2.2"/><circle cx="1889" cy="184.6" r="2.2"/></g>
<path d="M1485.8,225.3 V238 M1479.5,231.6 H1492.2" stroke="#fff" stroke-width="1.5"/>
<circle cx="1486" cy="277" r="11.6" stroke="#3a8edb" stroke-width="1.3" fill="#fff"/>
<circle cx="1486" cy="277" r="4.8" stroke="#3a8edb" stroke-width="1.1" fill="none"/>
<path d="M1486,270 V272.2 M1486,281.8 V284 M1479,277 H1481.2 M1490.8,277 H1493" stroke="#3a8edb" stroke-width="1.1"/>
<circle cx="1486" cy="277" r="0.9" fill="#3a8edb"/>
<circle cx="1511" cy="300" r="5.7" stroke="#555" stroke-width="1.1" fill="none"/>
<path d="M1510.2,298.8 H1511.2 V302.8 M1509.8,302.8 H1512.4" stroke="#555" stroke-width="1"/>
<circle cx="1511.1" cy="296.9" r="0.7" fill="#555"/>
<path d="M79.6,16.6 H92.8 M83.6,12.6 L79.6,16.6 L83.6,20.6" stroke="#a9a9a9" stroke-width="1.2" fill="none" stroke-linecap="round" stroke-linejoin="round"/>
<rect x="1449" y="463" width="4" height="24" fill="#dde2e8"/>
<circle cx="283.5" cy="118.4" r="2" fill="#8a8a8a"/><circle cx="283.5" cy="122.7" r="2" fill="#8a8a8a"/><circle cx="283.5" cy="127.0" r="2" fill="#8a8a8a"/><circle cx="482.5" cy="118.4" r="2" fill="#8a8a8a"/><circle cx="482.5" cy="122.7" r="2" fill="#8a8a8a"/><circle cx="482.5" cy="127.0" r="2" fill="#8a8a8a"/><circle cx="681.5" cy="118.4" r="2" fill="#3a8edb"/><circle cx="681.5" cy="122.7" r="2" fill="#3a8edb"/><circle cx="681.5" cy="127.0" r="2" fill="#3a8edb"/><circle cx="880.5" cy="118.4" r="2" fill="#8a8a8a"/><circle cx="880.5" cy="122.7" r="2" fill="#8a8a8a"/><circle cx="880.5" cy="127.0" r="2" fill="#8a8a8a"/><circle cx="1415.5" cy="118.4" r="2" fill="#8a8a8a"/><circle cx="1415.5" cy="122.7" r="2" fill="#8a8a8a"/><circle cx="1415.5" cy="127.0" r="2" fill="#8a8a8a"/></svg>
</body></html>
